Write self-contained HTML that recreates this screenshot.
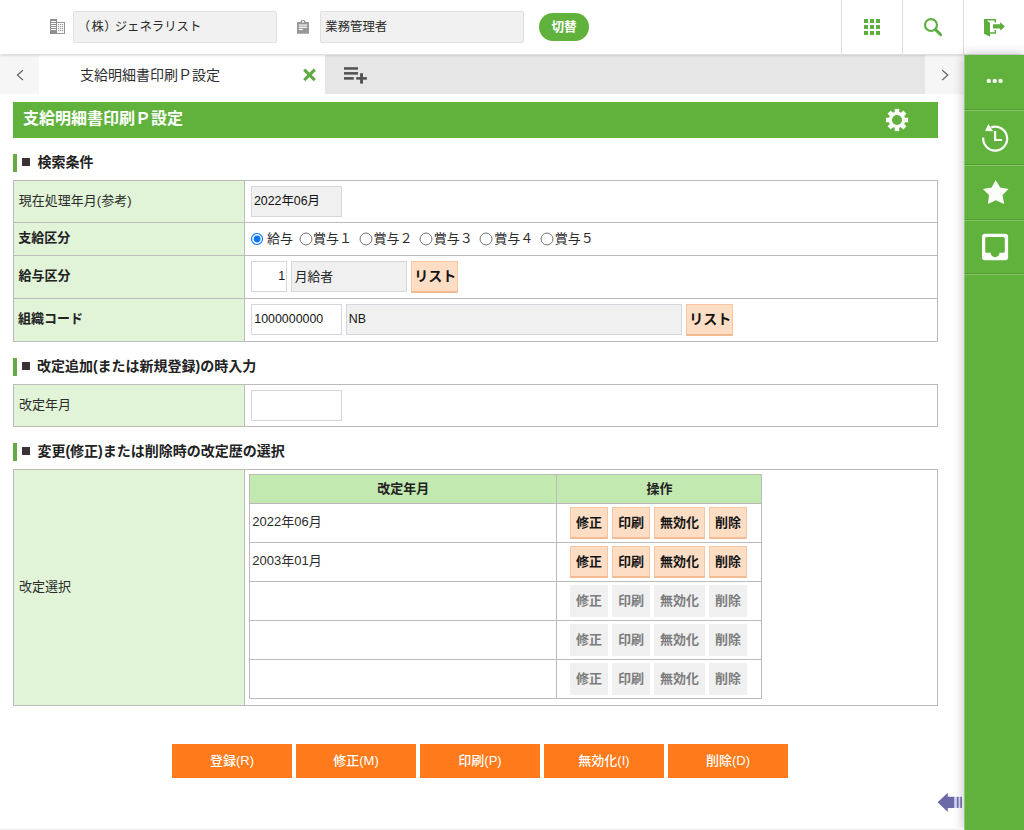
<!DOCTYPE html>
<html lang="ja"><head><meta charset="utf-8"><title>支給明細書印刷Ｐ設定</title>
<style>
html,body{margin:0;padding:0}
body{width:1024px;height:830px;position:relative;overflow:hidden;background:#fff;font-family:"Liberation Sans","Noto Sans CJK JP",sans-serif;font-size:13px;color:#333}
body>div{position:absolute;box-sizing:border-box}
.t{overflow:visible;pointer-events:none}
.t svg{display:block;overflow:visible}
.t text{font-family:"Liberation Sans","Noto Sans CJK JP",sans-serif;white-space:pre}
.i{position:absolute;display:block;overflow:visible}
</style></head><body>
<div style="left:0px;top:55px;width:39px;height:39px;background:#f6f6f6"></div>
<div style="left:39px;top:55px;width:286px;height:39px;background:#fff"></div>
<div style="left:325px;top:55px;width:600px;height:39px;background:#e6e6e6"></div>
<div style="left:925px;top:55px;width:39px;height:39px;background:#f6f6f6"></div>
<svg class="i" style="left:14px;top:66px" width="12" height="18" aria-hidden="true"><path d="M9 4.1 L3.5 9.1 L9 14.1" fill="none" stroke="#5c5c5c" stroke-width="1.25"/></svg>
<svg class="i" style="left:939px;top:66px" width="12" height="18" aria-hidden="true"><path d="M3.2 4.1 L8.7 9.1 L3.2 14.1" fill="none" stroke="#5c5c5c" stroke-width="1.25"/></svg>
<div class="t" style="left:77px;top:60px;width:147px;height:28px"><svg width="147" height="28"><text x="2.95" y="19.77" font-size="14" fill="#2e2e2e">支給明細書印刷Ｐ設定</text></svg></div>
<svg class="i" style="left:300px;top:65px" width="20" height="20" aria-hidden="true"><path d="M4.2 4.7 L14.8 15.1 M14.8 4.7 L4.2 15.1" fill="none" stroke="#62aa45" stroke-width="3.1"/></svg>
<svg class="i" style="left:340px;top:60px" width="30" height="28" aria-hidden="true"><g fill="#525252"><rect x="4" y="7.2" width="14" height="2.5"/><rect x="4" y="12.1" width="14" height="2.5"/><rect x="4" y="17.1" width="9.8" height="2.55"/><rect x="16.2" y="17.1" width="10.7" height="2.55"/><rect x="20.1" y="13.2" width="2.9" height="10.4"/></g></svg>
<div style="left:0px;top:0px;width:1024px;height:54px;background:#fff;box-shadow:0 1px 3px rgba(0,0,0,.2)"></div>
<div style="left:841px;top:0px;width:1px;height:54px;background:#dcdcdc"></div>
<div style="left:902px;top:0px;width:1px;height:54px;background:#dcdcdc"></div>
<div style="left:963px;top:0px;width:1px;height:54px;background:#dcdcdc"></div>
<svg class="i" style="left:50px;top:19px" width="16" height="16" aria-hidden="true"><rect x="0" y="0" width="7" height="15" fill="#8e8e8e"/><rect x="1" y="2" width="5" height="1" fill="#fff"/><rect x="1" y="4" width="5" height="1" fill="#fff"/><rect x="1" y="6" width="5" height="1" fill="#fff"/><rect x="1" y="8" width="5" height="1" fill="#fff"/><rect x="1" y="10" width="5" height="1" fill="#fff"/><rect x="6.5" y="3.5" width="8" height="11" fill="#fff" stroke="#969696" stroke-width="1"/><rect x="0" y="0" width="7" height="15" fill="none"/><rect x="8.0" y="5" width="1.2" height="1.2" fill="#999"/><rect x="10.0" y="5" width="1.2" height="1.2" fill="#999"/><rect x="12.0" y="5" width="1.2" height="1.2" fill="#999"/><rect x="8.0" y="7" width="1.2" height="1.2" fill="#999"/><rect x="10.0" y="7" width="1.2" height="1.2" fill="#999"/><rect x="12.0" y="7" width="1.2" height="1.2" fill="#999"/><rect x="8.0" y="9" width="1.2" height="1.2" fill="#999"/><rect x="10.0" y="9" width="1.2" height="1.2" fill="#999"/><rect x="12.0" y="9" width="1.2" height="1.2" fill="#999"/><rect x="8.0" y="11" width="1.2" height="1.2" fill="#999"/><rect x="10.0" y="11" width="1.2" height="1.2" fill="#999"/><rect x="12.0" y="11" width="1.2" height="1.2" fill="#999"/><rect x="6" y="0" width="1" height="15" fill="#8e8e8e"/></svg>
<div style="left:73px;top:11px;width:204px;height:32px;background:#f1f1f1;border:1px solid #e0e0e0;border-radius:2px"></div>
<div class="t" style="left:75px;top:13px;width:19px;height:25px"><svg width="19" height="25"><text x="2.79" y="17.91" font-size="12.4" fill="#2a2a2a">（</text></svg></div>
<div class="t" style="left:89px;top:13px;width:19px;height:25px"><svg width="19" height="25"><text x="2.52" y="17.91" font-size="12.4" fill="#2a2a2a">株</text></svg></div>
<div class="t" style="left:102px;top:13px;width:19px;height:25px"><svg width="19" height="25"><text x="2.33" y="17.91" font-size="12.4" fill="#2a2a2a">）</text></svg></div>
<div class="t" style="left:112px;top:13px;width:92px;height:25px"><svg width="92" height="25"><text x="2.66" y="17.91" font-size="12.4" fill="#2a2a2a">ジェネラリスト</text></svg></div>
<svg class="i" style="left:295px;top:20px" width="16" height="16" aria-hidden="true"><g fill="#979797"><rect x="2" y="2" width="12" height="11.8" rx="0.9"/><path d="M5.2 2.6 L5.8 1 Q6.1 0.05 7 0.05 H9 Q9.9 0.05 10.2 1 L10.8 2.6 Z"/></g><g fill="#fff"><rect x="7.1" y="0.95" width="1.8" height="1.6"/><rect x="3.8" y="4.5" width="8.4" height="1.2"/><rect x="3.8" y="6.7" width="8.4" height="1.2"/><rect x="3.8" y="8.85" width="4.1" height="1.2"/></g></svg>
<div style="left:320px;top:11px;width:204px;height:32px;background:#f1f1f1;border:1px solid #e0e0e0;border-radius:2px"></div>
<div class="t" style="left:323px;top:13px;width:67px;height:25px"><svg width="67" height="25"><text x="2.29" y="17.91" font-size="12.4" fill="#2a2a2a">業務管理者</text></svg></div>
<div style="left:539px;top:13px;width:50px;height:28px;background:#61b23c;border-radius:14px"></div>
<div class="t" style="left:549px;top:13px;width:32px;height:26px"><svg width="32" height="26"><text x="2.4" y="18.09" font-size="12.6" font-weight="bold" fill="#fff">切替</text></svg></div>
<svg class="i" style="left:860px;top:15px" width="24" height="24" viewBox="0 0 24 24" aria-hidden="true"><path fill="#5cae3d" d="M4 8h4V4H4v4zm6 12h4v-4h-4v4zm-6 0h4v-4H4v4zm0-6h4v-4H4v4zm6 0h4v-4h-4v4zm6-10v4h4V4h-4zm-6 4h4V4h-4v4zm6 6h4v-4h-4v4zm0 6h4v-4h-4v4z"/></svg>
<svg class="i" style="left:920px;top:14px" width="26" height="26" aria-hidden="true"><circle cx="11" cy="11" r="5.95" fill="none" stroke="#5cae3d" stroke-width="2.15"/><path d="M15.6 15.6 L20.7 20.7" stroke="#5cae3d" stroke-width="2.9" stroke-linecap="round" fill="none"/></svg>
<svg class="i" style="left:980px;top:15px" width="30" height="26" aria-hidden="true"><path fill="#5cae3d" d="M4 4 H16 V7.5 H14.5 V5.5 H7 L10 8 V17.3 H14.5 V15 H16 V18.8 H10 V21.8 L4 18.8 Z"/><path fill="#5cae3d" d="M13 9.2 H20.2 V7 L24.9 11.4 L20.2 15.7 V13.6 H13 Z"/></svg>
<div style="left:964px;top:55px;width:60px;height:775px;background:#61b23c;box-shadow:0 0 11px rgba(0,0,0,.27)"></div>
<div style="left:964px;top:55px;width:1px;height:775px;background:rgba(255,255,255,.3)"></div>
<div style="left:964px;top:109px;width:60px;height:1px;background:rgba(0,0,0,.1)"></div>
<div style="left:964px;top:110px;width:60px;height:1px;background:rgba(255,255,255,.22)"></div>
<div style="left:964px;top:164px;width:60px;height:1px;background:rgba(0,0,0,.1)"></div>
<div style="left:964px;top:165px;width:60px;height:1px;background:rgba(255,255,255,.22)"></div>
<div style="left:964px;top:219px;width:60px;height:1px;background:rgba(0,0,0,.1)"></div>
<div style="left:964px;top:220px;width:60px;height:1px;background:rgba(255,255,255,.22)"></div>
<div style="left:964px;top:273px;width:60px;height:1px;background:rgba(0,0,0,.1)"></div>
<div style="left:964px;top:274px;width:60px;height:1px;background:rgba(255,255,255,.22)"></div>
<svg class="i" style="left:984px;top:76px" width="24" height="10" fill="#f4faf0" aria-hidden="true"><circle cx="4.75" cy="4.9" r="2.2"/><circle cx="10.75" cy="4.9" r="2.2"/><circle cx="16.6" cy="4.9" r="2.2"/></svg>
<svg class="i" style="left:978px;top:120px" width="36" height="36" aria-hidden="true"><g fill="none" stroke="#fbfdf9" stroke-width="2.2"><path d="M5.2 17.7 A12 12 0 1 0 13.2 7.3"/></g><path fill="#fbfdf9" d="M10.4 3.9 L7.1 11 L15.2 11.2 Z"/><path fill="#fbfdf9" d="M16 11 h2.2 v8 h5.8 v2.1 h-8 z"/></svg>
<svg class="i" style="left:980px;top:176px" width="32" height="32" aria-hidden="true"><path fill="#fbfdf9" d="M15.69 4.1 L20.2 11.6 L28.5 13.0 L22.6 19.1 L24.15 28.1 L15.69 24.2 L7.95 28.1 L9.0 19.1 L2.9 13.0 L11.7 11.6 Z"/></svg>
<svg class="i" style="left:978px;top:230px" width="36" height="36" aria-hidden="true"><rect x="4" y="3.7" width="26.1" height="26.5" rx="2.9" fill="#fbfdf9"/><path fill="#61b23c" d="M8.7 7.1 h16.6 a1.5 1.5 0 0 1 1.5 1.5 v12.6 a1.5 1.5 0 0 1 -1.5 1.5 h-3.8 a4.45 4.45 0 0 1 -8.9 0 h-3.9 a1.5 1.5 0 0 1 -1.5 -1.5 v-12.6 a1.5 1.5 0 0 1 1.5 -1.5 z"/></svg>
<div style="left:13px;top:102px;width:925px;height:36px;background:#61b23c"></div>
<div class="t" style="left:20px;top:102px;width:166px;height:32px"><svg width="166" height="32"><text x="2.98" y="22.18" font-size="16" font-weight="bold" fill="#fff">支給明細書印刷Ｐ設定</text></svg></div>
<svg class="i" style="left:884.9px;top:107.9px" width="24" height="24" aria-hidden="true"><circle cx="12" cy="12" r="8.3" fill="#fff"/><rect x="9.75" y="0.9" width="4.5" height="6" fill="#fff" transform="rotate(0 12 12)"/><rect x="9.75" y="0.9" width="4.5" height="6" fill="#fff" transform="rotate(45 12 12)"/><rect x="9.75" y="0.9" width="4.5" height="6" fill="#fff" transform="rotate(90 12 12)"/><rect x="9.75" y="0.9" width="4.5" height="6" fill="#fff" transform="rotate(135 12 12)"/><rect x="9.75" y="0.9" width="4.5" height="6" fill="#fff" transform="rotate(180 12 12)"/><rect x="9.75" y="0.9" width="4.5" height="6" fill="#fff" transform="rotate(225 12 12)"/><rect x="9.75" y="0.9" width="4.5" height="6" fill="#fff" transform="rotate(270 12 12)"/><rect x="9.75" y="0.9" width="4.5" height="6" fill="#fff" transform="rotate(315 12 12)"/><circle cx="12" cy="12" r="5" fill="#61b23c"/></svg>
<div style="left:13px;top:154px;width:4px;height:18px;background:#67ab47"></div>
<div style="left:22px;top:158px;width:8px;height:8.3px;background:#3a3234"></div>
<div class="t" style="left:35px;top:147px;width:63px;height:28px"><svg width="63" height="28"><text x="2.48" y="20.07" font-size="14" font-weight="bold" fill="#222">検索条件</text></svg></div>
<div style="left:13px;top:180px;width:925px;height:162px;border:1px solid #bbbbbb;background:#fff"></div>
<div style="left:14px;top:181px;width:230px;height:160px;background:#e1f4d8"></div>
<div style="left:244px;top:181px;width:1px;height:160px;background:#bbbbbb"></div>
<div style="left:14px;top:222px;width:923px;height:1px;background:#bbbbbb"></div>
<div style="left:14px;top:255px;width:923px;height:1px;background:#bbbbbb"></div>
<div style="left:14px;top:298px;width:923px;height:1px;background:#bbbbbb"></div>
<div class="t" style="left:16px;top:187px;width:122px;height:26px"><svg width="122" height="26"><text x="2.85" y="18.39" font-size="13" fill="#2b2b2b">現在処理年月(参考)</text></svg></div>
<div class="t" style="left:16px;top:224px;width:58px;height:26px"><svg width="58" height="26"><text x="2.25" y="18.29" font-size="13" font-weight="bold" fill="#222">支給区分</text></svg></div>
<div class="t" style="left:16px;top:262px;width:58px;height:26px"><svg width="58" height="26"><text x="2.4" y="18.09" font-size="13" font-weight="bold" fill="#222">給与区分</text></svg></div>
<div class="t" style="left:16px;top:304px;width:72px;height:26px"><svg width="72" height="26"><text x="2.1" y="18.69" font-size="13" font-weight="bold" fill="#222">組織コード</text></svg></div>
<div style="left:251px;top:186px;width:91px;height:31px;background:#f0f0f0;border:1px solid #d4d7dc"></div>
<div class="t" style="left:251px;top:188px;width:76px;height:25px"><svg width="76" height="25"><text x="2.88" y="17.41" font-size="12.4" fill="#111">2022年06月</text></svg></div>
<svg class="i" style="left:249.3px;top:230.5px" width="16" height="16" aria-hidden="true"><circle cx="8" cy="8" r="5.5" fill="#fff" stroke="#0a75f5" stroke-width="1.15"/><circle cx="8" cy="8" r="3.45" fill="#0a75f5"/></svg>
<div class="t" style="left:265px;top:225px;width:32px;height:26px"><svg width="32" height="26"><text x="2.01" y="18.49" font-size="13" fill="#2b2b2b">給与</text></svg></div>
<svg class="i" style="left:297.5px;top:230.5px" width="16" height="16" aria-hidden="true"><circle cx="8" cy="8" r="5.95" fill="#fff" stroke="#757575" stroke-width="1"/></svg>
<div class="t" style="left:311px;top:225px;width:45px;height:26px"><svg width="45" height="26"><text x="2.05" y="18.49" font-size="13" fill="#2b2b2b">賞与１</text></svg></div>
<svg class="i" style="left:357.7px;top:230.5px" width="16" height="16" aria-hidden="true"><circle cx="8" cy="8" r="5.95" fill="#fff" stroke="#757575" stroke-width="1"/></svg>
<div class="t" style="left:371px;top:225px;width:45px;height:26px"><svg width="45" height="26"><text x="2.45" y="18.49" font-size="13" fill="#2b2b2b">賞与２</text></svg></div>
<svg class="i" style="left:418px;top:230.5px" width="16" height="16" aria-hidden="true"><circle cx="8" cy="8" r="5.95" fill="#fff" stroke="#757575" stroke-width="1"/></svg>
<div class="t" style="left:431px;top:225px;width:45px;height:26px"><svg width="45" height="26"><text x="2.85" y="18.49" font-size="13" fill="#2b2b2b">賞与３</text></svg></div>
<svg class="i" style="left:478.3px;top:230.5px" width="16" height="16" aria-hidden="true"><circle cx="8" cy="8" r="5.95" fill="#fff" stroke="#757575" stroke-width="1"/></svg>
<div class="t" style="left:492px;top:225px;width:45px;height:26px"><svg width="45" height="26"><text x="2.25" y="18.49" font-size="13" fill="#2b2b2b">賞与４</text></svg></div>
<svg class="i" style="left:538.6px;top:230.5px" width="16" height="16" aria-hidden="true"><circle cx="8" cy="8" r="5.95" fill="#fff" stroke="#757575" stroke-width="1"/></svg>
<div class="t" style="left:552px;top:225px;width:45px;height:26px"><svg width="45" height="26"><text x="2.65" y="18.49" font-size="13" fill="#2b2b2b">賞与５</text></svg></div>
<div style="left:251px;top:261px;width:36px;height:31px;background:#fff;border:1px solid #d4d7dc"></div>
<div class="t" style="left:276px;top:263px;width:13px;height:25px"><svg width="13" height="25"><text x="2.31" y="17.41" font-size="12.4" fill="#151515">1</text></svg></div>
<div style="left:291px;top:261px;width:116px;height:31px;background:#f0f0f0;border:1px solid #d4d7dc"></div>
<div class="t" style="left:292px;top:262px;width:45px;height:26px"><svg width="45" height="26"><text x="2.63" y="18.56" font-size="12.8" fill="#222">月給者</text></svg></div>
<div style="left:411px;top:261px;width:47px;height:32px;background:#fddec4;border:1px solid #f6c6a3;border-bottom:2px solid #f4ba90"></div>
<div class="t" style="left:412px;top:261px;width:48px;height:28px"><svg width="48" height="28"><text x="2.3" y="20.22" font-size="14" font-weight="bold" fill="#141414">リスト</text></svg></div>
<div style="left:251px;top:304px;width:91px;height:31px;background:#fff;border:1px solid #d4d7dc"></div>
<div class="t" style="left:252px;top:306px;width:77px;height:25px"><svg width="77" height="25"><text x="2.31" y="17.46" font-size="12.4" fill="#151515">1000000000</text></svg></div>
<div style="left:346px;top:304px;width:336px;height:31px;background:#f0f0f0;border:1px solid #d4d7dc"></div>
<div class="t" style="left:346px;top:306px;width:26px;height:25px"><svg width="26" height="25"><text x="2.73" y="17.41" font-size="12.4" fill="#151515">NB</text></svg></div>
<div style="left:686px;top:304px;width:47px;height:32px;background:#fddec4;border:1px solid #f6c6a3;border-bottom:2px solid #f4ba90"></div>
<div class="t" style="left:687px;top:304px;width:48px;height:28px"><svg width="48" height="28"><text x="2.3" y="20.22" font-size="14" font-weight="bold" fill="#141414">リスト</text></svg></div>
<div style="left:13px;top:358px;width:4px;height:18px;background:#67ab47"></div>
<div style="left:22px;top:362px;width:8px;height:8.3px;background:#3a3234"></div>
<div class="t" style="left:34px;top:351px;width:232px;height:28px"><svg width="232" height="28"><text x="2.96" y="20.07" font-size="14" font-weight="bold" fill="#222">改定追加(または新規登録)の時入力</text></svg></div>
<div style="left:13px;top:384px;width:925px;height:43px;border:1px solid #bbbbbb;background:#fff"></div>
<div style="left:14px;top:385px;width:230px;height:41px;background:#e1f4d8"></div>
<div style="left:244px;top:385px;width:1px;height:41px;background:#bbbbbb"></div>
<div class="t" style="left:17px;top:391px;width:58px;height:26px"><svg width="58" height="26"><text x="2.03" y="18.39" font-size="13" fill="#2b2b2b">改定年月</text></svg></div>
<div style="left:251px;top:390px;width:91px;height:31px;background:#fff;border:1px solid #d4d7dc"></div>
<div style="left:13px;top:443px;width:4px;height:18px;background:#67ab47"></div>
<div style="left:22px;top:447px;width:8px;height:8.3px;background:#3a3234"></div>
<div class="t" style="left:35px;top:436px;width:258px;height:28px"><svg width="258" height="28"><text x="2.4" y="20.07" font-size="14" font-weight="bold" fill="#222">変更(修正)または削除時の改定歴の選択</text></svg></div>
<div style="left:13px;top:469px;width:925px;height:237px;border:1px solid #bbbbbb;background:#fff"></div>
<div style="left:14px;top:470px;width:230px;height:235px;background:#e1f4d8"></div>
<div style="left:244px;top:470px;width:1px;height:235px;background:#bbbbbb"></div>
<div class="t" style="left:17px;top:572px;width:58px;height:26px"><svg width="58" height="26"><text x="2.03" y="18.89" font-size="13" fill="#2b2b2b">改定選択</text></svg></div>
<div style="left:249px;top:474px;width:513px;height:225px;border:1px solid #bbbbbb;background:#fff"></div>
<div style="left:250px;top:475px;width:511px;height:28px;background:#c2e9b0"></div>
<div style="left:556px;top:475px;width:1px;height:223px;background:#bbbbbb"></div>
<div style="left:250px;top:503px;width:511px;height:1px;background:#bbbbbb"></div>
<div style="left:250px;top:542px;width:511px;height:1px;background:#bbbbbb"></div>
<div style="left:250px;top:581px;width:511px;height:1px;background:#bbbbbb"></div>
<div style="left:250px;top:620px;width:511px;height:1px;background:#bbbbbb"></div>
<div style="left:250px;top:659px;width:511px;height:1px;background:#bbbbbb"></div>
<div class="t" style="left:375px;top:475px;width:58px;height:26px"><svg width="58" height="26"><text x="2.37" y="18.04" font-size="13" font-weight="bold" fill="#222">改定年月</text></svg></div>
<div class="t" style="left:644px;top:474px;width:32px;height:26px"><svg width="32" height="26"><text x="2.53" y="18.89" font-size="13" font-weight="bold" fill="#222">操作</text></svg></div>
<div class="t" style="left:250px;top:508px;width:82px;height:26px"><svg width="82" height="26"><text x="2.35" y="18.39" font-size="13" fill="#2b2b2b">2022年06月</text></svg></div>
<div class="t" style="left:250px;top:547px;width:82px;height:26px"><svg width="82" height="26"><text x="2.35" y="18.39" font-size="13" fill="#2b2b2b">2003年01月</text></svg></div>
<div style="left:570px;top:507px;width:38px;height:32px;background:#fddec4;border:1px solid #f6c6a3;border-bottom:2px solid #f4ba90"></div>
<div class="t" style="left:574px;top:509px;width:32px;height:26px"><svg width="32" height="26"><text x="2" y="18.44" font-size="13" font-weight="bold" fill="#141414">修正</text></svg></div>
<div style="left:612px;top:507px;width:38px;height:32px;background:#fddec4;border:1px solid #f6c6a3;border-bottom:2px solid #f4ba90"></div>
<div class="t" style="left:616px;top:509px;width:32px;height:26px"><svg width="32" height="26"><text x="2" y="18.44" font-size="13" font-weight="bold" fill="#141414">印刷</text></svg></div>
<div style="left:654px;top:507px;width:51px;height:32px;background:#fddec4;border:1px solid #f6c6a3;border-bottom:2px solid #f4ba90"></div>
<div class="t" style="left:658px;top:509px;width:45px;height:26px"><svg width="45" height="26"><text x="2" y="18.44" font-size="13" font-weight="bold" fill="#141414">無効化</text></svg></div>
<div style="left:709px;top:507px;width:38px;height:32px;background:#fddec4;border:1px solid #f6c6a3;border-bottom:2px solid #f4ba90"></div>
<div class="t" style="left:713px;top:509px;width:32px;height:26px"><svg width="32" height="26"><text x="2" y="18.44" font-size="13" font-weight="bold" fill="#141414">削除</text></svg></div>
<div style="left:570px;top:546px;width:38px;height:32px;background:#fddec4;border:1px solid #f6c6a3;border-bottom:2px solid #f4ba90"></div>
<div class="t" style="left:574px;top:548px;width:32px;height:26px"><svg width="32" height="26"><text x="2" y="18.44" font-size="13" font-weight="bold" fill="#141414">修正</text></svg></div>
<div style="left:612px;top:546px;width:38px;height:32px;background:#fddec4;border:1px solid #f6c6a3;border-bottom:2px solid #f4ba90"></div>
<div class="t" style="left:616px;top:548px;width:32px;height:26px"><svg width="32" height="26"><text x="2" y="18.44" font-size="13" font-weight="bold" fill="#141414">印刷</text></svg></div>
<div style="left:654px;top:546px;width:51px;height:32px;background:#fddec4;border:1px solid #f6c6a3;border-bottom:2px solid #f4ba90"></div>
<div class="t" style="left:658px;top:548px;width:45px;height:26px"><svg width="45" height="26"><text x="2" y="18.44" font-size="13" font-weight="bold" fill="#141414">無効化</text></svg></div>
<div style="left:709px;top:546px;width:38px;height:32px;background:#fddec4;border:1px solid #f6c6a3;border-bottom:2px solid #f4ba90"></div>
<div class="t" style="left:713px;top:548px;width:32px;height:26px"><svg width="32" height="26"><text x="2" y="18.44" font-size="13" font-weight="bold" fill="#141414">削除</text></svg></div>
<div style="left:570px;top:585px;width:38px;height:32px;background:#f0f0f0"></div>
<div class="t" style="left:574px;top:586px;width:32px;height:26px"><svg width="32" height="26"><text x="2" y="18.79" font-size="13" font-weight="bold" fill="#7c7c7c">修正</text></svg></div>
<div style="left:612px;top:585px;width:38px;height:32px;background:#f0f0f0"></div>
<div class="t" style="left:616px;top:586px;width:32px;height:26px"><svg width="32" height="26"><text x="2" y="18.79" font-size="13" font-weight="bold" fill="#7c7c7c">印刷</text></svg></div>
<div style="left:654px;top:585px;width:51px;height:32px;background:#f0f0f0"></div>
<div class="t" style="left:658px;top:586px;width:45px;height:26px"><svg width="45" height="26"><text x="2" y="18.79" font-size="13" font-weight="bold" fill="#7c7c7c">無効化</text></svg></div>
<div style="left:709px;top:585px;width:38px;height:32px;background:#f0f0f0"></div>
<div class="t" style="left:713px;top:586px;width:32px;height:26px"><svg width="32" height="26"><text x="2" y="18.79" font-size="13" font-weight="bold" fill="#7c7c7c">削除</text></svg></div>
<div style="left:570px;top:624px;width:38px;height:32px;background:#f0f0f0"></div>
<div class="t" style="left:574px;top:625px;width:32px;height:26px"><svg width="32" height="26"><text x="2" y="18.79" font-size="13" font-weight="bold" fill="#7c7c7c">修正</text></svg></div>
<div style="left:612px;top:624px;width:38px;height:32px;background:#f0f0f0"></div>
<div class="t" style="left:616px;top:625px;width:32px;height:26px"><svg width="32" height="26"><text x="2" y="18.79" font-size="13" font-weight="bold" fill="#7c7c7c">印刷</text></svg></div>
<div style="left:654px;top:624px;width:51px;height:32px;background:#f0f0f0"></div>
<div class="t" style="left:658px;top:625px;width:45px;height:26px"><svg width="45" height="26"><text x="2" y="18.79" font-size="13" font-weight="bold" fill="#7c7c7c">無効化</text></svg></div>
<div style="left:709px;top:624px;width:38px;height:32px;background:#f0f0f0"></div>
<div class="t" style="left:713px;top:625px;width:32px;height:26px"><svg width="32" height="26"><text x="2" y="18.79" font-size="13" font-weight="bold" fill="#7c7c7c">削除</text></svg></div>
<div style="left:570px;top:663px;width:38px;height:32px;background:#f0f0f0"></div>
<div class="t" style="left:574px;top:664px;width:32px;height:26px"><svg width="32" height="26"><text x="2" y="18.79" font-size="13" font-weight="bold" fill="#7c7c7c">修正</text></svg></div>
<div style="left:612px;top:663px;width:38px;height:32px;background:#f0f0f0"></div>
<div class="t" style="left:616px;top:664px;width:32px;height:26px"><svg width="32" height="26"><text x="2" y="18.79" font-size="13" font-weight="bold" fill="#7c7c7c">印刷</text></svg></div>
<div style="left:654px;top:663px;width:51px;height:32px;background:#f0f0f0"></div>
<div class="t" style="left:658px;top:664px;width:45px;height:26px"><svg width="45" height="26"><text x="2" y="18.79" font-size="13" font-weight="bold" fill="#7c7c7c">無効化</text></svg></div>
<div style="left:709px;top:663px;width:38px;height:32px;background:#f0f0f0"></div>
<div class="t" style="left:713px;top:664px;width:32px;height:26px"><svg width="32" height="26"><text x="2" y="18.79" font-size="13" font-weight="bold" fill="#7c7c7c">削除</text></svg></div>
<div style="left:172px;top:744px;width:120px;height:34px;background:#ff7a1a"></div>
<div class="t" style="left:206px;top:747px;width:53px;height:26px"><svg width="53" height="26"><text x="26" y="18.29" font-size="13" font-weight="500" text-anchor="middle" fill="#fff">登録(R)</text></svg></div>
<div style="left:296px;top:744px;width:120px;height:34px;background:#ff7a1a"></div>
<div class="t" style="left:330px;top:747px;width:54px;height:26px"><svg width="54" height="26"><text x="26" y="18.29" font-size="13" font-weight="500" text-anchor="middle" fill="#fff">修正(M)</text></svg></div>
<div style="left:420px;top:744px;width:120px;height:34px;background:#ff7a1a"></div>
<div class="t" style="left:454px;top:747px;width:53px;height:26px"><svg width="53" height="26"><text x="26" y="18.29" font-size="13" font-weight="500" text-anchor="middle" fill="#fff">印刷(P)</text></svg></div>
<div style="left:544px;top:744px;width:120px;height:34px;background:#ff7a1a"></div>
<div class="t" style="left:573px;top:747px;width:63px;height:26px"><svg width="63" height="26"><text x="31" y="18.29" font-size="13" font-weight="500" text-anchor="middle" fill="#fff">無効化(I)</text></svg></div>
<div style="left:668px;top:744px;width:120px;height:34px;background:#ff7a1a"></div>
<div class="t" style="left:702px;top:747px;width:54px;height:26px"><svg width="54" height="26"><text x="26" y="18.29" font-size="13" font-weight="500" text-anchor="middle" fill="#fff">削除(D)</text></svg></div>
<svg class="i" style="left:936px;top:790px" width="28" height="24" aria-hidden="true"><path fill="#6b69a6" d="M1.6 12.3 L11.8 2.7 V6.8 H18.5 V17.9 H11.8 V22 Z"/><rect x="18.5" y="6.8" width="7.5" height="11.1" fill="#cfcff0"/><rect x="20.9" y="6.8" width="1.6" height="11.1" fill="#6b69a6"/><rect x="24.3" y="6.8" width="1.7" height="11.1" fill="#6b69a6"/></svg>
<div style="left:0px;top:828px;width:964px;height:1px;background:#fafafa"></div>
<div style="left:0px;top:829px;width:964px;height:1px;background:#eeeeee"></div>
</body></html>
